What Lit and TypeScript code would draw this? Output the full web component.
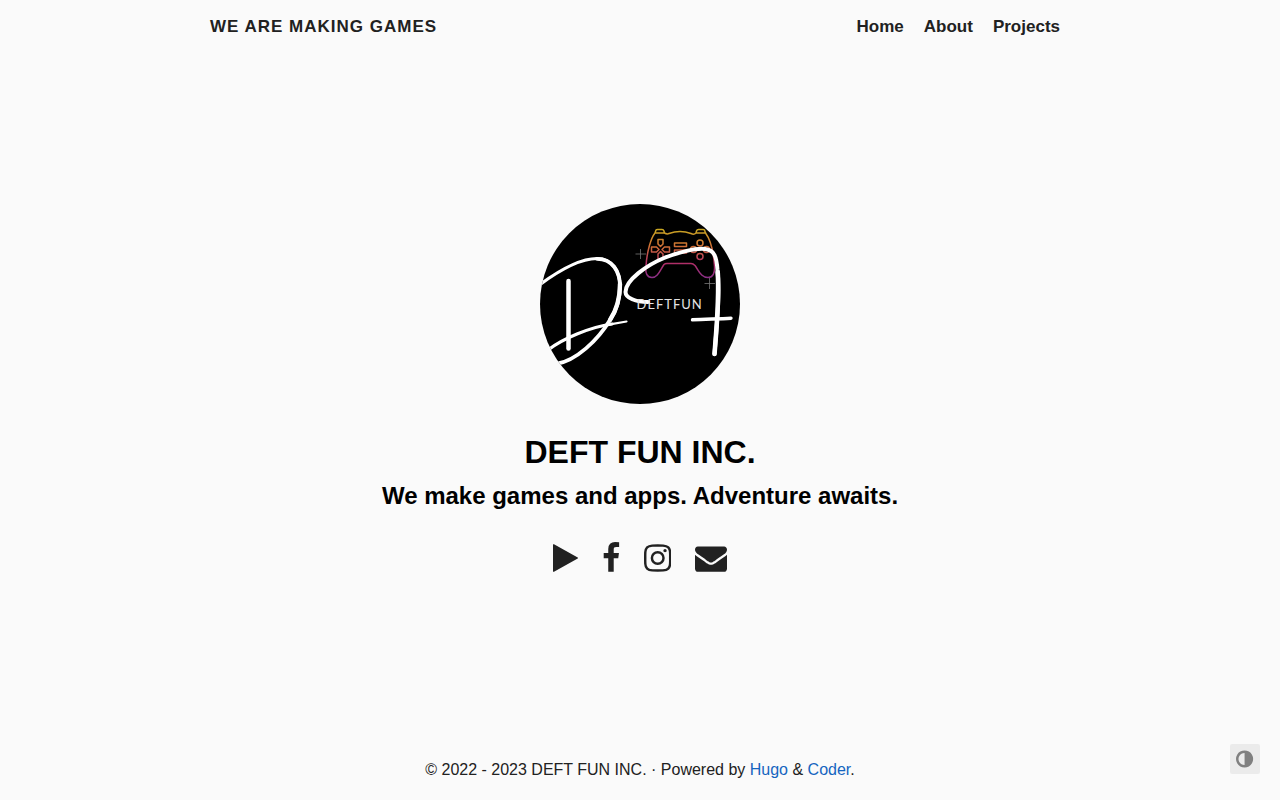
import { LitElement, html, css, svg } from "lit";
import { customElement } from "lit/decorators.js";

interface Glyph {
  label: string;
  width: number;
  path: string;
}

// Font-style glyphs: 1792 units per em, y axis pointing up, ascent 1536.
const social: Glyph[] = [
  {
    label: "Google Play",
    width: 1408,
    path: "M1384 609l-1328 -738q-23 -13 -39.5 -3t-16.5 36v1472q0 26 16.5 36t39.5 -3l1328 -738q23 -13 23 -31t-23 -31z",
  },
  {
    label: "Facebook",
    width: 1024,
    path: "M959 1524v-264h-157q-86 0 -116 -36t-30 -108v-189h293l-39 -296h-254v-759h-306v759h-255v296h255v218q0 186 104 288.5t277 102.5q147 0 228 -12z",
  },
  {
    label: "Instagram",
    width: 1536,
    path: "M1024 640q0 106 -75 181t-181 75t-181 -75t-75 -181t75 -181t181 -75t181 75t75 181zM1162 640q0 -164 -115 -279t-279 -115t-279 115t-115 279t115 279t279 115t279 -115t115 -279zM1270 1050q0 -38 -27 -65t-65 -27t-65 27t-27 65t27 65t65 27t65 -27t27 -65zM768 1270q-7 0 -76.5 .5t-105.5 0t-96.5 -3t-103 -10t-71.5 -18.5q-50 -20 -88 -58t-58 -88q-11 -29 -18.5 -71.5t-10 -103t-3 -96.5t0 -105.5t.5 -76.5t-.5 -76.5t0 -105.5t3 -96.5t10 -103t18.5 -71.5q20 -50 58 -88t88 -58q29 -11 71.5 -18.5t103 -10t96.5 -3t105.5 0t76.5 .5t76.5 -.5t105.5 0t96.5 3t103 10t71.5 18.5q50 20 88 58t58 88q11 29 18.5 71.5t10 103t3 96.5t0 105.5t-.5 76.5t.5 76.5t0 105.5t-3 96.5t-10 103t-18.5 71.5q-20 50 -58 88t-88 58q-29 11 -71.5 18.5t-103 10t-96.5 3t-105.5 0t-76.5 -.5zM1536 640q0 -229 -5 -317q-10 -208 -124 -322t-322 -124q-88 -5 -317 -5t-317 5q-208 10 -322 124t-124 322q-5 88 -5 317t5 317q10 208 124 322t322 124q88 5 317 5t317 -5q208 -10 322 -124t124 -322q5 -88 5 -317z",
  },
  {
    label: "Email",
    width: 1792,
    path: "M1792 826v-794q0 -66 -47 -113t-113 -47h-1472q-66 0 -113 47t-47 113v794q44 -49 101 -87q362 -246 497 -345q57 -42 92.5 -65.5t94.5 -48t110 -24.5h1h1q51 0 110 24.5t94.5 48t92.5 65.5q170 123 498 345q57 39 100 87zM1792 1120q0 -79 -49 -151t-122 -123q-376 -261 -468 -325q-10 -7 -42.5 -31t-54 -38.5t-52 -32.5t-57.5 -27t-50 -9h-1h-1q-23 0 -50 9t-57.5 27t-52 32.5t-54 38.5t-42.5 31q-91 64 -262 182.5t-205 142.5q-62 42 -117 115.5t-55 136.5q0 78 41.5 130t118.5 52h1472q65 0 112.5 -47t47.5 -113z",
  },
];

const adjust: Glyph = {
  label: "Toggle colour scheme",
  width: 1536,
  path: "M768 96v1088q-148 0 -273 -73t-198 -198t-73 -273t73 -273t198 -198t273 -73zM1536 640q0 -209 -103 -385.5t-279.5 -279.5t-385.5 -103t-385.5 103t-279.5 279.5t-103 385.5t103 385.5t279.5 279.5t385.5 103t385.5 -103t279.5 -279.5t103 -385.5z",
};

const glyph = (g: Glyph) => html`
  <svg class="glyph" viewBox="0 0 ${g.width} 1792" aria-hidden="true">
    <path transform="translate(0 1536) scale(1 -1)" d=${g.path}></path>
  </svg>
`;

const avatar = svg`
  <defs>
    <linearGradient id="pad" gradientUnits="userSpaceOnUse" x1="0" y1="25" x2="0" y2="74">
      <stop offset="0" stop-color="#c9a821"></stop>
      <stop offset="0.35" stop-color="#cf6f35"></stop>
      <stop offset="0.7" stop-color="#b02f68"></stop>
      <stop offset="1" stop-color="#8a2f88"></stop>
    </linearGradient>
  </defs>
  <rect width="200" height="200" fill="#000"></rect>
  <g fill="none" stroke="url(#pad)" stroke-width="1.5" stroke-linejoin="round">
    <path d="M115 29C111 34 107 47 106 62C105 69 107 73.500 112 73.500C118 73.500 120 66 124 60.500Q125 59.500 127 59.500H151Q153 59.500 155 61.500C159 67 161 73.500 168 73.500C173 73.500 175 69 174.500 62C173.500 48 170 35 165.500 29"></path>
    <path d="M115 29L116 26Q116.500 25.500 117.500 25.500H122Q123.500 25.500 124 27L124.500 29.500M115 29H124.500Q127 30.500 129 29.500Q140 25.500 151 29.500Q154 31 156 29H165.500L164.500 26Q164 25.500 163 25.500H158.500Q157 25.500 156.500 27L156 29"></path>
    <path d="M118 35.500H123V40L120.500 42.500L118 40ZM118 55V50L120.500 47.500L123 50V55ZM111.500 43H116.500L119 45.500L116.500 48H111.500ZM129.500 43H124.500L122 45.500L124.500 48H129.500Z"></path>
    <rect x="134.500" y="39" width="12" height="3.500"></rect>
    <rect x="134.500" y="46" width="12" height="3"></rect>
    <circle cx="160" cy="39" r="3"></circle>
    <circle cx="160" cy="52.500" r="3"></circle>
    <circle cx="153.500" cy="45.500" r="3"></circle>
    <circle cx="166.500" cy="45.500" r="3"></circle>
  </g>
  <path d="M95.500 50H106M100.500 45V55M164.500 79.500H175M169.500 74V85" stroke="#777" stroke-width="0.800"></path>
  <g fill="none" stroke="#fff" stroke-linecap="round" stroke-linejoin="round">
    <path stroke-width="4.500" d="M28.500 77V144.500"></path>
    <path stroke-width="3.200" d="M-2 82C18 67 40 54.500 57 54.500C72 54.500 80.500 67 80 84"></path>
    <path stroke-width="3.800" d="M57 54.800C72 54.800 80.500 67 80 84C79.500 96 76 107 70 116C58 136 36 157 16 160"></path>
    <path stroke-width="4.400" d="M80 80C80 95 76 107 70 116"></path>
    <path stroke-width="3.200" d="M8 146C22 135 50 123 72 120"></path>
    <path stroke-width="2.200" d="M70 120.300L86.500 117.500"></path>
    <path stroke-width="4" d="M108 98C96 98 85.500 94 85.500 88C85.500 76 107 61 124 54C139 48 156 44 165 45C174 46 176.500 52 177.500 66C180 90 177 119 174.500 150"></path>
    <path stroke-width="4.600" d="M177.700 68C179.500 92 177 119 174.500 150"></path>
    <path stroke-width="3.400" d="M152.500 115.800C166 115 178 115 191 114.200"></path>
  </g>
  <text class="brand-text" x="96.500" y="105">DEFTFUN</text>
`;

@customElement("app-root")
export class AppRoot extends LitElement {
  static styles = css`
    :host {
      display: flex;
      flex-direction: column;
      min-height: 100vh;
      box-sizing: border-box;
      background: #fafafa;
      color: #212121;
      font-family: "Liberation Sans", Arial, sans-serif;
      font-size: 16px;
      line-height: 28px;
    }
    a {
      color: #1565c0;
      text-decoration: none;
    }
    .bar {
      box-sizing: border-box;
      width: 100%;
      max-width: 900px;
      margin: 0 auto;
      padding: 13px 20px;
      display: flex;
      justify-content: space-between;
      align-items: center;
      font-size: 17px;
      font-weight: 700;
    }
    .bar a {
      color: inherit;
    }
    .title {
      text-transform: uppercase;
      letter-spacing: 1px;
    }
    .menu {
      display: flex;
      gap: 20px;
      margin: 0;
      padding: 0 10px;
      list-style: none;
    }
    .hero {
      flex: 1;
      display: flex;
      flex-direction: column;
      align-items: center;
      justify-content: center;
      padding: 0 20px 16px;
      text-align: center;
    }
    .avatar {
      display: block;
      width: 200px;
      height: 200px;
      border-radius: 50%;
    }
    .brand-text {
      font-family: Lato, "Liberation Sans", sans-serif;
      font-size: 13px;
      letter-spacing: 1px;
      fill: #e4e4e4;
    }
    h1,
    h2 {
      margin: 0;
      color: #000;
      font-weight: 700;
    }
    h1 {
      margin-top: 28px;
      font-size: 32px;
      line-height: 40px;
    }
    h2 {
      margin-top: 8px;
      font-size: 24px;
      line-height: 32px;
    }
    .social {
      display: flex;
      gap: 24px;
      margin: 30px 0 0;
      padding: 0;
      list-style: none;
    }
    .social a {
      display: block;
      color: #212121;
    }
    .glyph {
      display: block;
      height: 32px;
      fill: currentColor;
    }
    .footer {
      padding: 16px 20px;
      text-align: center;
    }
    .toggle {
      position: fixed;
      right: 20px;
      bottom: 26px;
      display: flex;
      align-items: center;
      justify-content: center;
      width: 30px;
      height: 30px;
      padding: 0;
      border: 0;
      border-radius: 2px;
      background: #ebebeb;
      color: #808080;
      cursor: pointer;
    }
    .toggle .glyph {
      height: 20px;
    }
  `;

  render() {
    return html`
      <nav class="bar">
        <a class="title" href="#">We are making games</a>
        <ul class="menu">
          <li><a href="#home">Home</a></li>
          <li><a href="#about">About</a></li>
          <li><a href="#projects">Projects</a></li>
        </ul>
      </nav>
      <main class="hero">
        <svg class="avatar" viewBox="0 0 200 200" role="img" aria-label="Deft Fun logo">${avatar}</svg>
        <h1>DEFT FUN INC.</h1>
        <h2>We make games and apps. Adventure awaits.</h2>
        <ul class="social">
          ${social.map(
            (g) => html`<li><a href="#" aria-label=${g.label}>${glyph(g)}</a></li>`
          )}
        </ul>
      </main>
      <footer class="footer">
        © 2022 - 2023 DEFT FUN INC. · Powered by <a href="#hugo">Hugo</a> &amp;
        <a href="#coder">Coder</a>.
      </footer>
      <button class="toggle" type="button" aria-label=${adjust.label}>${glyph(adjust)}</button>
    `;
  }
}
